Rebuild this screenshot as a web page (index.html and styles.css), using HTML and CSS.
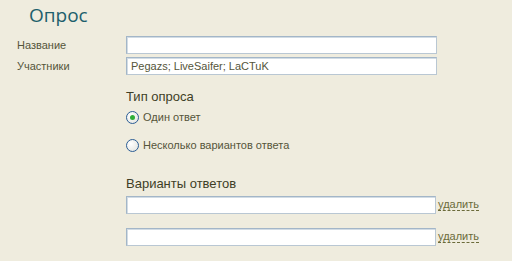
FILE: index.html
```html
<!DOCTYPE html>
<html lang="ru">
<head>
  <meta charset="UTF-8">
  <title>Опрос</title>
  <link rel="stylesheet" href="styles.css">
</head>
<body>
<div class="page">
  <h1 class="title">Опрос</h1>
  <form class="poll">
    <div class="row">
      <label class="label">Название</label>
      <input type="text" class="field">
    </div>
    <div class="row">
      <label class="label">Участники</label>
      <input type="text" class="field" value="Pegazs; LiveSaifer; LaCTuK">
    </div>

    <div class="group">
      <div class="groupTitle">Тип опроса</div>
      <label class="option"><input type="radio" name="type" checked> Один ответ</label>
      <label class="option"><input type="radio" name="type"> Несколько вариантов ответа</label>
    </div>

    <div class="group answers">
      <div class="groupTitle">Варианты ответов</div>
      <div class="answer">
        <input type="text" class="field short">
        <a href="#" class="remove">удалить</a>
      </div>
      <div class="answer">
        <input type="text" class="field short">
        <a href="#" class="remove">удалить</a>
      </div>
    </div>
  </form>
</div>
</body>
</html>
```

FILE: styles.css
```css
body {
  margin: 0;
  background-color: #efecde;
  font-family: "Liberation Sans", Arial, sans-serif;
  font-size: 11px;
  color: #55553a;
}
.title {
  margin: 0;
  padding: 2px 0 0 29px;
  font-family: "Open Sans", "Liberation Sans", sans-serif;
  font-weight: normal;
  font-size: 19px;
  line-height: 26px;
  color: #1d5f6c;
}
.poll {
  padding-top: 8px;
}
.row {
  display: flex;
  align-items: center;
  height: 18px;
  margin-bottom: 3px;
}
.label {
  width: 109px;
  padding-left: 17px;
}
.field {
  box-sizing: border-box;
  width: 311px;
  height: 18px;
  margin: 0;
  padding: 0 4px;
  border: 1px solid #a3b6c8;
  border-right-color: #b9c7d3;
  border-bottom-color: #b9c7d3;
  box-shadow: inset 1px 1px 0 #d2dce4;
  background: #fff;
  font-family: "Liberation Sans", Arial, sans-serif;
  font-size: 11px;
  color: #55553a;
  outline: none;
}
.field.short {
  width: 310px;
}
.group {
  padding-left: 126px;
}
.groupTitle {
  font-size: 13px;
  color: #3e3e26;
  line-height: 16px;
}
.option {
  display: flex;
  align-items: center;
  height: 16px;
  color: #55553a;
}
.option input {
  appearance: none;
  box-sizing: border-box;
  width: 13px;
  height: 13px;
  margin: 0 4px 0 0;
  border: 1px solid #2b5d95;
  border-radius: 50%;
  background: radial-gradient(circle at 35% 35%, #ffffff 0, #e6e7e2 80%, #d4d4ce 100%);
  display: grid;
  place-items: center;
}
.option input:checked::after {
  content: "";
  width: 5px;
  height: 5px;
  border-radius: 50%;
  background: #2fae37;
}
.group .groupTitle {
  margin-top: 14px;
  margin-bottom: 4px;
}
.group .option + .option {
  margin-top: 12px;
}
.answers .groupTitle {
  margin-top: 23px;
  margin-bottom: 4px;
}
.answer {
  display: flex;
  align-items: center;
  margin-bottom: 14px;
}
.remove {
  margin-left: 2px;
  color: #6b6b3a;
  text-decoration: none;
  border-bottom: 1px dashed #6b6b3a;
  line-height: 12px;
  margin-top: -1px;
}
```
